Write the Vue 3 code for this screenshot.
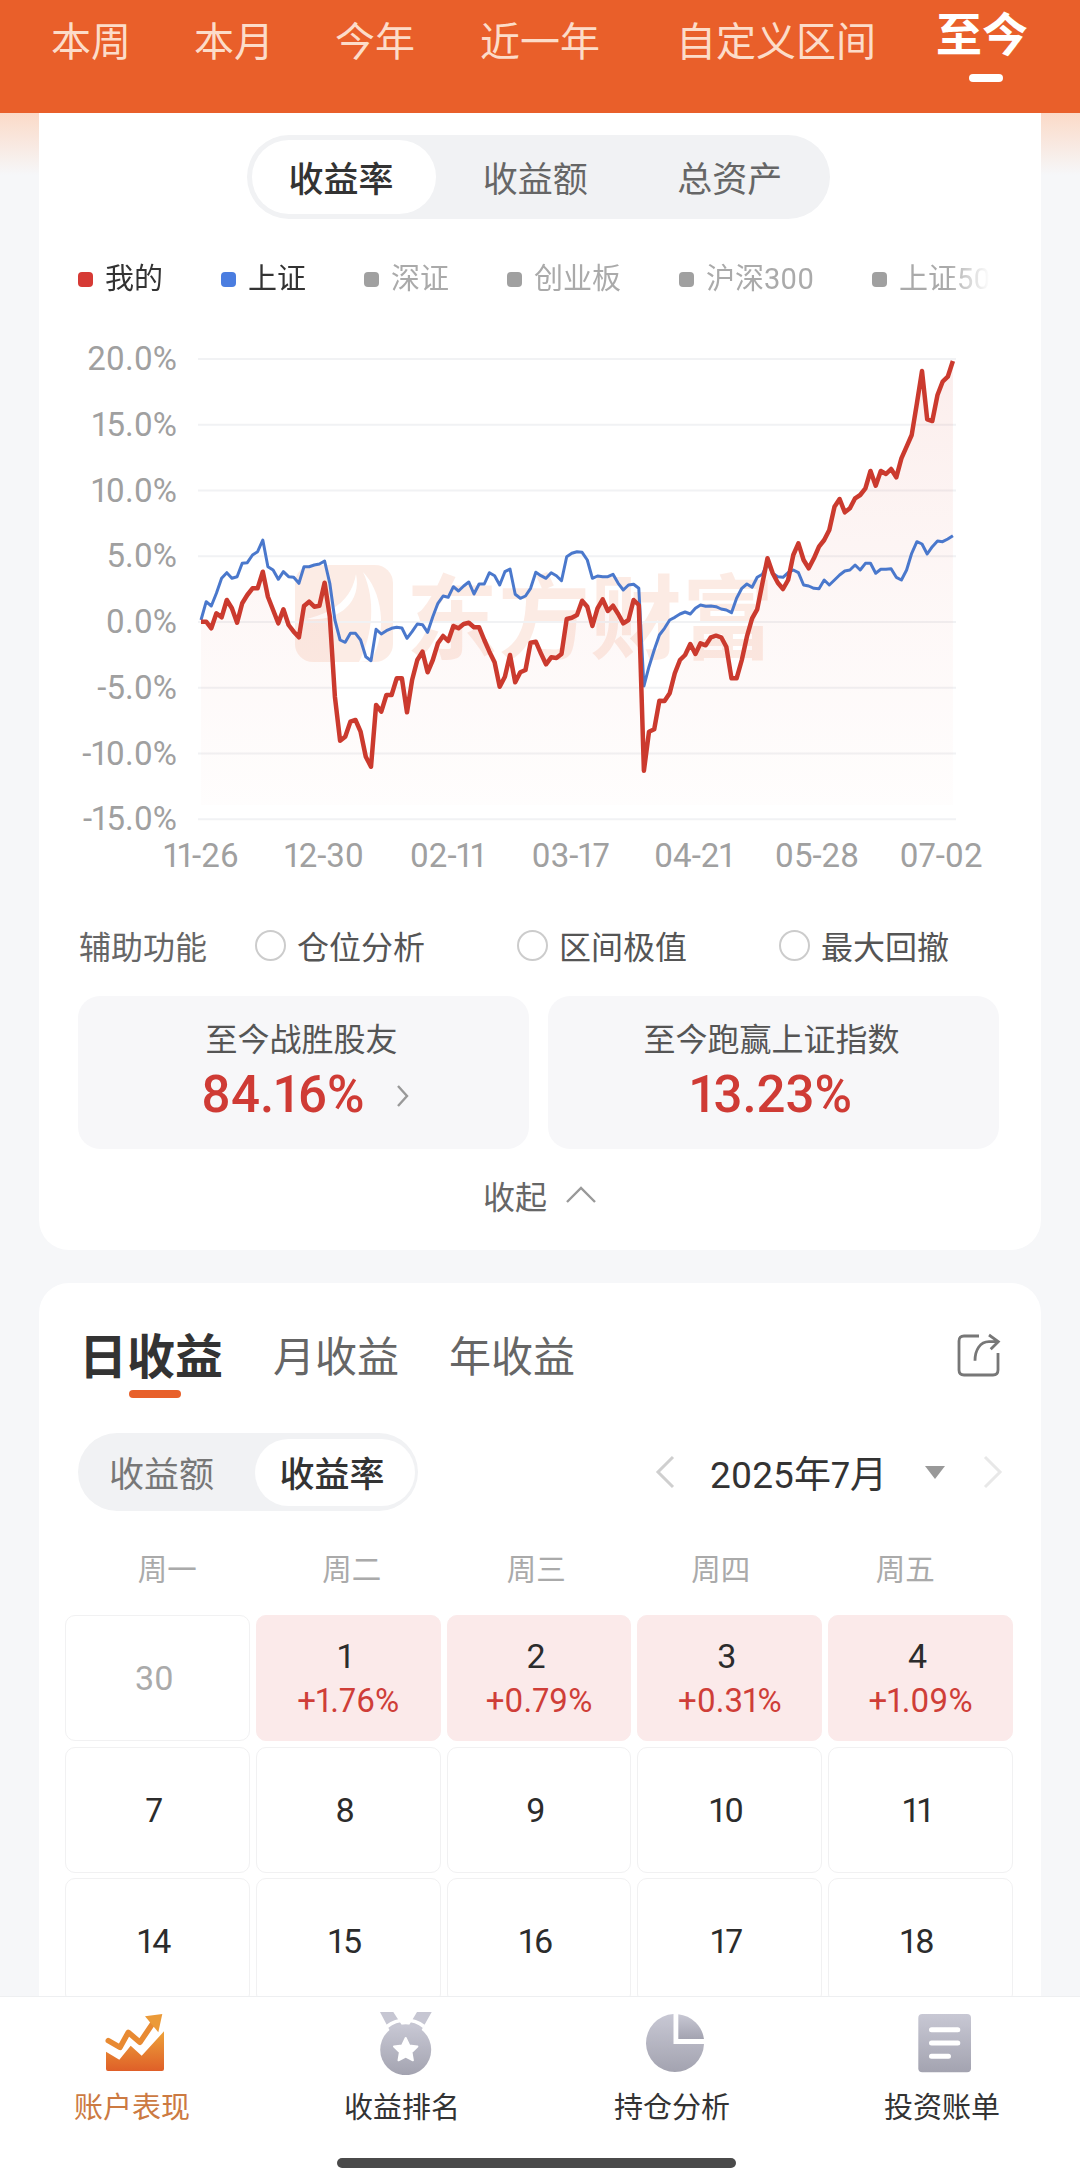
<template>
  <div class="app">
    <header class="topbar">
      <a v-for="r in ranges" :key="r" class="range" :class="{ active: r === '至今' }">{{ r }}</a>
    </header>

    <main class="main">
      <section class="card overview">
        <div class="seg">
          <span class="seg-item on">收益率</span>
          <span class="seg-item">收益额</span>
          <span class="seg-item">总资产</span>
        </div>

        <div class="legend">
          <span v-for="l in legend" :key="l.name" class="legend-item" :class="{ off: !l.on }">
            <i class="dot" :style="{ background: l.color }"></i>{{ l.name }}
          </span>
        </div>

        <svg class="chart" width="1002" height="560" viewBox="39 320 1002 560">
          <defs>
            <linearGradient id="areaFill" gradientUnits="userSpaceOnUse" x1="0" y1="359" x2="0" y2="805">
              <stop offset="0" stop-color="#d8402f" stop-opacity="0.09" />
              <stop offset="0.55" stop-color="#d8402f" stop-opacity="0.04" />
              <stop offset="1" stop-color="#d8402f" stop-opacity="0.01" />
            </linearGradient>
          </defs>

          <!-- watermark -->
          <rect x="295" y="565" width="98" height="97" rx="18" fill="#e9602a" opacity="0.12" />
          <path d="M356 574C352 598 335 612 307 619C337 622 362 604 356 574Z" fill="#fff" />
          <path d="M363 572C381 590 389 630 371 661L359 662C373 635 376 600 363 572Z" fill="#fff" />
          <text x="406" y="652" class="wm">东方财富</text>

          <line v-for="t in yTicks" :key="'g' + t.label" x1="198" x2="956" :y1="t.y" :y2="t.y" class="grid" />
          <path :d="areaPath" fill="url(#areaFill)" />
          <path :d="bluePath" class="line-blue" />
          <path :d="redPath" class="line-red" />

          <text v-for="t in yTicks" :key="t.label" x="177" :y="t.y + 11" class="tick" text-anchor="end">{{ t.label }}</text>
          <text v-for="t in xTicks" :key="t.label" :x="t.x" y="867" class="tick" text-anchor="middle">{{ t.label }}</text>
        </svg>

        <div class="aux">
          <span class="aux-label">辅助功能</span>
          <span v-for="a in aux" :key="a" class="aux-item"><i class="radio"></i>{{ a }}</span>
        </div>

        <div class="stats">
          <div class="stat">
            <div class="stat-title">至今战胜股友</div>
            <div class="stat-value">
              84.16%
              <svg class="stat-arrow" width="16" height="24" viewBox="0 0 16 24">
                <path d="M3 2l9 10-9 10" fill="none" stroke="#999" stroke-width="2.4" />
              </svg>
            </div>
          </div>
          <div class="stat">
            <div class="stat-title">至今跑赢上证指数</div>
            <div class="stat-value center">13.23%</div>
          </div>
        </div>

        <div class="fold">
          收起
          <svg width="32" height="18" viewBox="0 0 32 18">
            <path d="M2 16L16 2l14 14" fill="none" stroke="#999" stroke-width="2.4" />
          </svg>
        </div>
      </section>

      <section class="card daily">
        <div class="tabs">
          <span class="tab on">日收益</span>
          <span class="tab">月收益</span>
          <span class="tab">年收益</span>
          <svg class="share" width="44" height="44" viewBox="0 0 44 44">
            <path d="M22 3H7Q2 3 2 8V37Q2 42 7 42H36Q41 42 41 37V20" fill="none" stroke="#777" stroke-width="2.8" />
            <path d="M18 27.7C18 17 23 8.7 32 8.7H41M32 2l9.3 6.7-7.6 7.6" fill="none" stroke="#777" stroke-width="2.8" />
          </svg>
        </div>

        <div class="toolbar">
          <div class="seg small">
            <span class="seg-item">收益额</span>
            <span class="seg-item on">收益率</span>
          </div>
          <div class="month">
            <svg width="22" height="34" viewBox="0 0 22 34">
              <path d="M19 2L4 17l15 15" fill="none" stroke="#cfcfcf" stroke-width="3" />
            </svg>
            <span class="month-text">2025年7月</span>
            <i class="caret"></i>
            <svg width="22" height="34" viewBox="0 0 22 34">
              <path d="M3 2l15 15L3 32" fill="none" stroke="#e8e8e8" stroke-width="3" />
            </svg>
          </div>
        </div>

        <div class="week">
          <span v-for="w in week" :key="w">{{ w }}</span>
        </div>

        <div class="days">
          <div v-for="d in days" :key="d.n" class="day" :class="{ up: d.pct, muted: d.muted }">
            <span class="day-n">{{ d.n }}</span>
            <span v-if="d.pct" class="day-pct">{{ d.pct }}</span>
          </div>
        </div>
      </section>
    </main>

    <nav class="tabbar">
      <a class="bar-item active">
        <svg width="64" height="64" viewBox="0 0 64 64">
          <defs>
            <linearGradient id="orange" x1="0" y1="0" x2="0" y2="1">
              <stop offset="0" stop-color="#eda23a" />
              <stop offset="1" stop-color="#df5f28" />
            </linearGradient>
          </defs>
          <path d="M3 40.7L16.3 48.7 27.7 34.7 38.7 44.7 61 20.3V58Q61 60 59 60H5Q3 60 3 58Z" fill="url(#orange)" />
          <path d="M5.3 29.7L17 36.3 25.3 21.3 37 31.3 50 12" fill="none" stroke="#e88a32" stroke-width="5.5" stroke-linejoin="round" stroke-linecap="round" />
          <path d="M42 5.3L59.3 3 55.3 21.3Z" fill="#eb9a38" />
        </svg>
        <span>账户表现</span>
      </a>
      <a class="bar-item">
        <svg width="64" height="64" viewBox="0 0 64 64">
          <defs>
            <linearGradient id="grey" x1="0" y1="0" x2="0" y2="1">
              <stop offset="0" stop-color="#c8c8d4" />
              <stop offset="1" stop-color="#a3a3b0" />
            </linearGradient>
          </defs>
          <path d="M7 1H20.3L30 16 17 20ZM44 1H58.7L48 20 35 16Z" fill="#c6c6d2" />
          <circle cx="32.7" cy="38.7" r="25.5" fill="url(#grey)" />
          <path d="M14 15.5A30 30 0 0 1 51 15.5" fill="none" stroke="#fff" stroke-width="3.5" />
          <path d="M32.7 27l3.6 7.4 8.1 1.1-5.9 5.7 1.4 8.1-7.2-3.8-7.2 3.8 1.4-8.1-5.9-5.7 8.1-1.1Z" fill="#fff" stroke="#fff" stroke-width="2" stroke-linejoin="round" />
        </svg>
        <span>收益排名</span>
      </a>
      <a class="bar-item">
        <svg width="64" height="64" viewBox="0 0 64 64">
          <path d="M30.5 3A29 29 0 1 0 61 33H30.5Z" fill="url(#grey)" />
          <path d="M35.3 3.2A29 29 0 0 1 61 28H35.3Z" fill="url(#grey)" />
        </svg>
        <span>持仓分析</span>
      </a>
      <a class="bar-item">
        <svg width="64" height="64" viewBox="0 0 64 64">
          <rect x="5.3" y="3" width="52.7" height="58.3" rx="4" fill="url(#grey)" />
          <path d="M18.5 18.7H44.8M18.5 32H44.8M18.5 45.3H35.5" stroke="#fff" stroke-width="5" stroke-linecap="round" />
        </svg>
        <span>投资账单</span>
      </a>
      <i class="home-bar"></i>
    </nav>
  </div>
</template>

<script setup>
import { computed } from 'vue'

const ranges = ['本周', '本月', '今年', '近一年', '自定义区间', '至今']

const legend = [
  { name: '我的', color: '#d63a35', on: true },
  { name: '上证', color: '#4a7de0', on: true },
  { name: '深证', color: '#a0a0a0' },
  { name: '创业板', color: '#a0a0a0' },
  { name: '沪深300', color: '#a0a0a0' },
  { name: '上证50', color: '#a0a0a0' }
]

const aux = ['仓位分析', '区间极值', '最大回撤']
const week = ['周一', '周二', '周三', '周四', '周五']

const pct = { 1: '+1.76%', 2: '+0.79%', 3: '+0.31%', 4: '+1.09%' }
const days = [
  { n: 30, muted: true },
  ...[1, 2, 3, 4, 7, 8, 9, 10, 11, 14, 15, 16, 17, 18, 21, 22, 23, 24, 25].map((n) => ({ n, pct: pct[n] }))
]

const yTicks = ['20.0%', '15.0%', '10.0%', '5.0%', '0.0%', '-5.0%', '-10.0%', '-15.0%'].map((label, i) => ({
  label,
  y: 359 + i * 65.75
}))
const xTicks = ['11-26', '12-30', '02-11', '03-17', '04-21', '05-28', '07-02'].map((label, i) => ({
  label,
  x: i === 6 ? 941 : 201 + i * 123.2
}))

// y of each daily point, in page pixels
const red = [
  621.7, 621.7, 628.3, 613.3, 617.3, 600, 608.3, 622.7, 603.3, 595, 588.3, 588.3, 571.7, 596.7, 610, 623.3, 609.3, 625,
  631.7, 637.3, 606, 601.7, 606.7, 605.7, 582.7, 616.7, 696.7, 740.7, 736.7, 721.7, 720, 731.7, 756.7, 766.7, 705, 711.7,
  695, 695, 678.3, 678.3, 712.3, 680, 660, 651.7, 672.3, 660, 643.3, 636, 641, 626, 628.3, 624, 622.7, 627.3, 627.3, 640,
  651.7, 662.3, 686.7, 676.7, 655, 682.3, 672.3, 670, 642.7, 641.7, 653.3, 664.3, 657.3, 658, 654, 619, 617.7, 615, 600.7,
  606.7, 626, 608.3, 599.3, 611, 605.7, 614, 623.3, 620, 600, 605, 770.7, 731.7, 729.3, 700.7, 701, 693.3, 673.3, 660, 655,
  644, 654, 643.3, 645.3, 637.3, 635.7, 637.3, 646.7, 678.3, 678.3, 660, 636.7, 618.3, 609.3, 583.3, 558.3, 573.3, 582.7,
  589, 580, 555, 543.3, 560, 568.3, 558.3, 546.7, 540, 530, 506.7, 499, 512.3, 508.3, 498.3, 495, 488.3, 471, 485.7, 471,
  474, 469, 477.3, 458.3, 446.7, 435, 403.3, 371, 419.3, 421, 395, 381.7, 376.7, 361
]
const blue = [
  620, 601.7, 606, 593.3, 578.3, 572.7, 578.3, 576.7, 563.3, 562.7, 555, 551.7, 540, 566.7, 570, 579.3, 571.7, 576.7, 577.3,
  583.3, 566.7, 566.7, 565, 564, 561, 583.3, 620, 640, 642.3, 633.3, 633.3, 640, 656.7, 660.7, 629.3, 634, 630.7, 628.3,
  627.3, 628, 638.3, 631.7, 624, 624.7, 632.3, 616.7, 603.3, 596, 597.3, 586.7, 591, 586, 582, 594, 584, 584, 572.7, 575.7,
  585, 571.7, 569, 594.3, 598.3, 596, 588.3, 572.3, 575.7, 578.3, 572.7, 575.7, 580.7, 556.7, 553.3, 551.7, 552.3, 560,
  578.3, 576, 576.7, 576.7, 574.3, 583.3, 590, 585, 584.3, 588.3, 686, 666.7, 650, 635, 628.3, 620, 617.3, 614, 612, 614,
  608.3, 605, 606.3, 606, 606.7, 609, 610, 612.7, 598.3, 588.3, 584, 587.3, 577.3, 574.3, 562.7, 573.3, 576.7, 577.3, 572.7,
  570, 572.7, 585, 586, 588.3, 588.7, 580, 585, 580, 575, 571, 570, 565, 570, 563.3, 563.3, 573.3, 569.3, 569.3, 568.7,
  577.3, 580, 570, 553.3, 541.7, 544, 554, 546.7, 541, 541.7, 539, 535.7
]

const toPath = (ys) => ys.map((y, i) => (i ? 'L' : 'M') + (201 + i * 5.15).toFixed(1) + ' ' + y).join('')

const redPath = computed(() => toPath(red))
const bluePath = computed(() => toPath(blue))
const areaPath = computed(() => toPath(red) + 'L952.9 805L201 805Z')
</script>

<style>
html,
body {
  margin: 0;
  padding: 0;
  background: #f6f7f9;
}
</style>

<style scoped>
.app {
  position: relative;
  width: 1080px;
  height: 2184px;
  overflow: hidden;
  font-family: Roboto, "Noto Sans CJK SC", sans-serif;
  font-feature-settings: "pnum";
  color: #333;
  background: linear-gradient(to bottom, #fbdac8 113px, #f6f7f9 175px);
}

.topbar {
  display: flex;
  align-items: flex-start;
  gap: 61px;
  height: 113px;
  padding: 13px 0 0 51px;
  box-sizing: border-box;
  background: #e95f2a;
}

.range {
  position: relative;
  font-size: 40px;
  line-height: 60px;
  color: #fcdcc9;
  white-space: nowrap;
}

.range:nth-child(2) {
  margin-left: 2px;
}

.range:nth-child(4) {
  margin-left: 4px;
}

.range:nth-child(5) {
  margin-left: 15px;
}

.range.active {
  margin-top: -8px;
  margin-left: -1px;
  font-size: 46px;
  font-weight: 700;
  color: #fff;
}

.range.active::after {
  content: '';
  position: absolute;
  left: 33px;
  top: 69px;
  width: 34px;
  height: 8px;
  border-radius: 4px;
  background: #fff;
}

.main {
  padding: 0 39px;
}

.card {
  background: #fff;
  border-radius: 0 0 30px 30px;
}

.overview {
  padding: 22px 0 35px;
}

.seg {
  display: flex;
  width: 583px;
  height: 84px;
  margin: 0 auto;
  padding: 5px;
  box-sizing: border-box;
  border-radius: 42px;
  background: #f1f2f4;
  transform: translateX(-2px);
}

.seg-item {
  flex: 1;
  display: flex;
  align-items: center;
  justify-content: center;
  padding: 0 0 2px 5px;
  font-size: 35px;
  color: #666;
}

.seg-item.on {
  flex: none;
  width: 184px;
  padding: 0 5px 2px 0;
  box-sizing: border-box;
  border-radius: 37px;
  background: #fff;
  color: #333;
  font-weight: 500;
}

.legend {
  display: flex;
  gap: 58px;
  width: 912px;
  height: 40px;
  margin: 40px 0 0 39px;
  overflow: hidden;
  -webkit-mask-image: linear-gradient(to right, #000 870px, transparent 912px);
  mask-image: linear-gradient(to right, #000 870px, transparent 912px);
}

.legend-item {
  display: flex;
  align-items: center;
  flex: none;
  font-size: 29px;
  line-height: 40px;
  color: #333;
}

.legend-item.off {
  color: #aaa;
}

.dot {
  width: 15px;
  height: 15px;
  margin-right: 12px;
  border-radius: 4px;
}

.chart {
  display: block;
  margin-top: 21px;
}

.grid {
  stroke: #f1f2f4;
  stroke-width: 2;
}

.wm {
  font-size: 92px;
  font-weight: 700;
  fill: #e9602a;
  opacity: 0.12;
}

.tick {
  font-size: 33px;
  fill: #a0a0a0;
}

.line-red {
  fill: none;
  stroke: #cb3a2e;
  stroke-width: 4.5;
  stroke-linejoin: round;
}

.line-blue {
  fill: none;
  stroke: #4a78cc;
  stroke-width: 3;
  stroke-linejoin: round;
}

.aux {
  display: flex;
  align-items: center;
  height: 40px;
  margin: 45px 0 0 40px;
  font-size: 32px;
  color: #555;
}

.aux-label {
  width: 177px;
  color: #666;
}

.aux-item {
  display: flex;
  align-items: center;
  width: 263.5px;
}

.radio {
  width: 27px;
  height: 27px;
  margin-right: 11px;
  border: 2px solid #ccc;
  border-radius: 50%;
}

.stats {
  display: grid;
  grid-template-columns: 1fr 1fr;
  gap: 19px;
  margin: 31px 42px 0 39px;
}

.stat {
  height: 153px;
  padding-top: 24px;
  box-sizing: border-box;
  border-radius: 22px;
  background: #f7f7f9;
  text-align: center;
}

.stat-title {
  padding-right: 4px;
  font-size: 32px;
  line-height: 40px;
  color: #555;
}

.stat-value {
  position: relative;
  width: 161px;
  margin: 5px 0 0 123px;
  font-size: 51px;
  font-weight: 500;
  line-height: 60px;
  color: #cf3b35;
  white-space: nowrap;
}

.stat-value.center {
  margin-left: 142px;
}

.stat-arrow {
  position: absolute;
  left: 194px;
  top: 19px;
}

.fold {
  display: flex;
  align-items: center;
  justify-content: center;
  gap: 18px;
  height: 40px;
  margin-top: 26px;
  font-size: 32px;
  color: #666;
}

.daily {
  height: 1000px;
  margin-top: 33px;
  padding: 40px 28px 0 26px;
  border-radius: 30px 30px 0 0;
}

.tabs {
  position: relative;
  display: flex;
  align-items: center;
  height: 60px;
  padding-left: 14px;
}

.tab {
  margin-right: 50px;
  font-size: 42px;
  color: #666;
}

.tab.on {
  position: relative;
  font-size: 48px;
  font-weight: 700;
  color: #333;
}

.tab.on::after {
  content: '';
  position: absolute;
  left: 50px;
  bottom: -10px;
  width: 52px;
  height: 8px;
  border-radius: 4px;
  background: #e8602a;
}

.share {
  position: absolute;
  right: 12px;
  top: 10px;
}

.toolbar {
  display: flex;
  align-items: center;
  justify-content: space-between;
  margin: 50px 9px 0 13px;
}

.seg.small {
  width: 340px;
  height: 78px;
  margin: 0;
  padding: 6px 3px 5px;
  border-radius: 39px;
  transform: none;
}

.small .seg-item {
  padding: 0 13px 2px 0;
  font-size: 35px;
  color: #777;
}

.small .seg-item.on {
  width: 160px;
  padding: 0 6px 2px 0;
  border-radius: 34px;
  color: #333;
}

.month {
  display: flex;
  align-items: center;
}

.month-text {
  margin: 0 38px 0 34px;
  font-size: 37px;
  color: #333;
}

.caret {
  width: 0;
  height: 0;
  margin-right: 37px;
  border-left: 10.5px solid transparent;
  border-right: 10.5px solid transparent;
  border-top: 13px solid #999;
}

.week {
  display: grid;
  grid-template-columns: repeat(5, 184.5px);
  height: 40px;
  margin: 39px 0 0 10px;
  font-size: 29.5px;
  line-height: 40px;
  color: #aaa;
  text-align: center;
}

.days {
  display: grid;
  grid-template-columns: repeat(5, 1fr);
  gap: 5.5px 6px;
  margin-top: 25px;
}

.day {
  display: flex;
  flex-direction: column;
  align-items: center;
  justify-content: center;
  height: 126px;
  box-sizing: border-box;
  border: 1.5px solid #f1f1f2;
  border-radius: 10px;
  color: #2c2c2c;
}

.day-n {
  font-size: 34px;
  line-height: 44px;
  transform: translateX(-3px);
}

.day.muted {
  color: #aaa;
}

.day.up {
  border-color: #fbeaea;
  background: #fbeaea;
}

.day-pct {
  padding-top: 1px;
  font-size: 33px;
  line-height: 44px;
  color: #cf3e38;
}

.tabbar {
  position: absolute;
  left: 0;
  right: 0;
  top: 1996px;
  bottom: 0;
  display: grid;
  grid-template-columns: repeat(4, 1fr);
  border-top: 1.5px solid #eeeff1;
  box-sizing: border-box;
  background: #fff;
}

.bar-item {
  display: flex;
  flex-direction: column;
  align-items: center;
  padding-top: 14px;
  font-size: 29px;
  color: #333;
}

.bar-item svg {
  display: block;
}

.bar-item span {
  margin-top: 13px;
  padding-right: 6px;
  line-height: 40px;
}

.bar-item.active span {
  color: #cc7a42;
}

.home-bar {
  position: absolute;
  left: 337px;
  top: 161px;
  width: 399px;
  height: 10px;
  border-radius: 5px;
  background: #4a4a4a;
}
</style>
